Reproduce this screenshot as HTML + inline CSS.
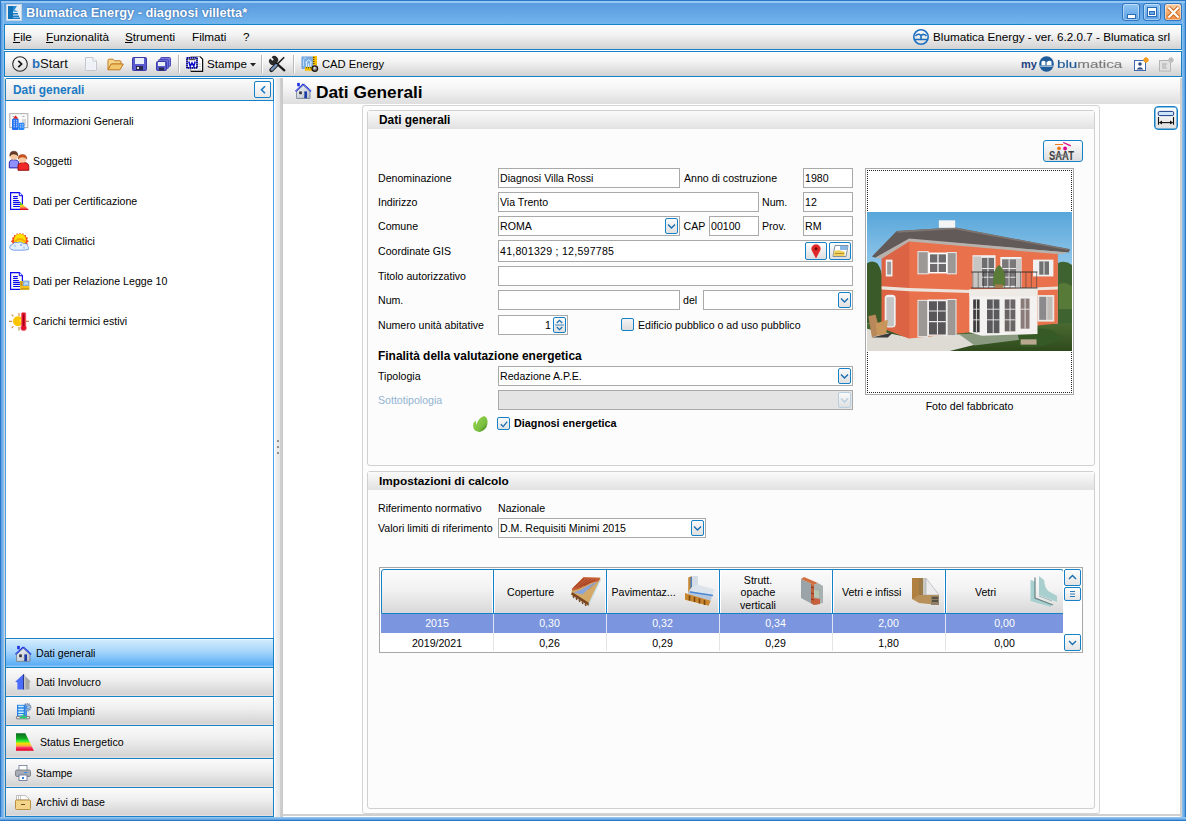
<!DOCTYPE html><html><head><meta charset="utf-8"><style>
html,body{margin:0;padding:0;}
body{width:1186px;height:821px;position:relative;overflow:hidden;background:#fff;font-family:"Liberation Sans",sans-serif;}
div{position:absolute;box-sizing:border-box;}
.t{white-space:nowrap;line-height:1;}
svg{overflow:visible}
</style></head><body>
<div style="left:0px;top:0px;width:1186px;height:821px;background:#6aaee8;"></div>
<div style="left:0px;top:0px;width:1186px;height:24px;background:linear-gradient(#5a9ce0 0,#5c9ee0 25%,#72b4ec 100%);"></div>
<div style="left:4px;top:24px;width:1178px;height:793px;background:#fff;"></div>
<div style="left:0px;top:0px;width:1186px;height:1px;background:#2a78c8"></div>
<div style="left:0px;top:1px;width:1186px;height:2px;background:#93c6f1"></div>
<div style="left:0px;top:0px;width:1px;height:821px;background:#2a78c8"></div>
<div style="left:1185px;top:0px;width:1px;height:821px;background:#2a78c8"></div>
<div style="left:1px;top:3px;width:3px;height:818px;background:linear-gradient(90deg,#5a9ce0,#8cc5f2)"></div>
<div style="left:1182px;top:3px;width:3px;height:818px;background:linear-gradient(90deg,#8cc5f2,#5a9ce0)"></div>
<div style="left:0px;top:817px;width:1186px;height:4px;background:linear-gradient(#9ccdf4,#3f88d6)"></div>
<div style="left:0px;top:820px;width:1186px;height:1px;background:#2a78c8"></div>
<div class="t" style="left:26px;top:7px;font-size:12.8px;font-weight:bold;color:#fff;text-shadow:0 0 2px rgba(20,60,130,.55),0 0 1px rgba(20,60,130,.4);">Blumatica Energy - diagnosi villetta*</div>
<div style="left:1122px;top:3px;width:18px;height:18px;border:1px solid #2f76c2;border-radius:3px;background:linear-gradient(#8ec4f2,#5ea2e4);box-shadow:inset 0 0 0 1px rgba(255,255,255,.45);"><div style="left:4px;top:10px;width:7px;height:3px;background:#fff;border:1px solid #2a6cb8;box-sizing:content-box"></div></div>
<div style="left:1143px;top:3px;width:18px;height:18px;border:1px solid #2f76c2;border-radius:3px;background:linear-gradient(#8ec4f2,#5ea2e4);box-shadow:inset 0 0 0 1px rgba(255,255,255,.45);"><div style="left:3px;top:3px;width:10px;height:10px;border:1px solid #2a6cb8;box-sizing:border-box;background:#fff"></div><div style="left:5px;top:7px;width:6px;height:4px;background:#6aaae8;border:1px solid #2a6cb8"></div></div>
<div style="left:1164px;top:3px;width:18px;height:18px;border:1px solid #2f76c2;border-radius:3px;background:linear-gradient(#fbd2aa,#ee8c3c);box-shadow:inset 0 0 0 1px rgba(255,255,255,.45);"><svg style="position:absolute;left:2px;top:2px" width="13" height="13" viewBox="0 0 13 13"><path d="M1.5 1.5L11.5 11.5M11.5 1.5L1.5 11.5" stroke="#d06a20" stroke-width="4.2"/><path d="M1.5 1.5L11.5 11.5M11.5 1.5L1.5 11.5" stroke="#fff" stroke-width="2.2"/></svg></div>
<div style="left:4px;top:24px;width:1178px;height:26px;border:1px solid #1681c6;background:linear-gradient(#fdfdfd 0%,#f3f3f3 40%,#d2d2d2 100%);"></div>
<div class="t" style="left:13px;top:31px;font-size:11.7px;font-weight:normal;color:#000;"><span style="text-decoration:underline;text-underline-offset:1px">F</span>ile</div>
<div class="t" style="left:46px;top:31px;font-size:11.7px;font-weight:normal;color:#000;"><span style="text-decoration:underline;text-underline-offset:1px">F</span>unzionalità</div>
<div class="t" style="left:125px;top:31px;font-size:11.7px;font-weight:normal;color:#000;"><span style="text-decoration:underline;text-underline-offset:1px">S</span>trumenti</div>
<div class="t" style="left:192px;top:31px;font-size:11.7px;font-weight:normal;color:#000;">Filmati</div>
<div class="t" style="left:243px;top:31px;font-size:11.7px;font-weight:normal;color:#000;">?</div>
<div class="t" style="left:933px;top:31px;font-size:11.7px;font-weight:normal;color:#000;">Blumatica Energy - ver. 6.2.0.7 - Blumatica srl</div>
<div style="left:4px;top:51px;width:1178px;height:26px;border:1px solid #1681c6;background:linear-gradient(#fdfdfd 0%,#f3f3f3 40%,#d2d2d2 100%);"></div>
<div class="t" style="left:32px;top:57px;font-size:13.2px;font-weight:normal;color:#111;"><span style="color:#2a6fb8;font-weight:bold">b</span>Start</div>
<div class="t" style="left:207px;top:58px;font-size:11.6px;font-weight:normal;color:#000;">Stampe</div>
<div class="t" style="left:322px;top:59px;font-size:11.2px;font-weight:normal;color:#000;">CAD Energy</div>
<div style="left:178px;top:55px;width:1px;height:18px;background:#b8b8b8;border-right:1px solid #fff;width:2px"></div>
<div style="left:261px;top:55px;width:1px;height:18px;background:#b8b8b8;border-right:1px solid #fff;width:2px"></div>
<div style="left:293px;top:55px;width:1px;height:18px;background:#b8b8b8;border-right:1px solid #fff;width:2px"></div>
<div style="left:4px;top:78px;width:1px;height:739px;background:#d2d2d2"></div>
<div style="left:5px;top:78px;width:269px;height:739px;border:1px solid #4aa0ea;border-top-color:#1681c6;border-radius:3px 3px 0 0;background:#fff;"></div>
<div style="left:5px;top:78px;width:269px;height:23px;border:1px solid #1681c6;border-bottom:none;border-radius:3px 3px 0 0;"></div>
<div style="left:6px;top:79px;width:267px;height:21px;background:linear-gradient(#fbfbfb,#e4e4e4);"></div>
<div style="left:6px;top:100px;width:267px;height:1px;background:#1681c6"></div>
<div class="t" style="left:13px;top:85px;font-size:11.9px;font-weight:bold;color:#1a7ac4;">Dati generali</div>
<div style="left:254px;top:81px;width:17px;height:17px;border:1px solid #1681c6;border-radius:2px;background:linear-gradient(#fff,#e8e8e8);"><svg style="position:absolute;left:5px;top:3px" width="7" height="10"><path d="M5 1.2L1.5 4.7L5 8.2" stroke="#1a7ac4" stroke-width="1.6" fill="none"/></svg></div>
<div class="t" style="left:33px;top:116px;font-size:10.6px;font-weight:normal;color:#000;">Informazioni Generali</div>
<div class="t" style="left:33px;top:156px;font-size:10.6px;font-weight:normal;color:#000;">Soggetti</div>
<div class="t" style="left:33px;top:196px;font-size:10.6px;font-weight:normal;color:#000;">Dati per Certificazione</div>
<div class="t" style="left:33px;top:236px;font-size:10.6px;font-weight:normal;color:#000;">Dati Climatici</div>
<div class="t" style="left:33px;top:276px;font-size:10.6px;font-weight:normal;color:#000;">Dati per Relazione Legge 10</div>
<div class="t" style="left:33px;top:316px;font-size:10.6px;font-weight:normal;color:#000;">Carichi termici estivi</div>
<div style="left:6px;top:638px;width:267px;height:30px;border-top:1px solid #1681c6;border-bottom:1px solid #1681c6;background:linear-gradient(#ffffff 0,#d2ebfd 1px,#a6d5fb 45%,#5caef6 92%,#9ad0fa 100%);"></div>
<div style="left:6px;top:667px;width:267px;height:30px;border-top:1px solid #1681c6;border-bottom:1px solid #1681c6;background:linear-gradient(#ffffff 0,#fafafa 1px,#efefef 40%,#d4d4d4 94%,#ebe4e0 100%);"></div>
<div style="left:6px;top:696px;width:267px;height:30px;border-top:1px solid #1681c6;border-bottom:1px solid #1681c6;background:linear-gradient(#ffffff 0,#fafafa 1px,#efefef 40%,#d4d4d4 94%,#ebe4e0 100%);"></div>
<div style="left:6px;top:725px;width:267px;height:34px;border-top:1px solid #1681c6;border-bottom:1px solid #1681c6;background:linear-gradient(#ffffff 0,#fafafa 1px,#efefef 40%,#d4d4d4 94%,#ebe4e0 100%);"></div>
<div style="left:6px;top:758px;width:267px;height:30px;border-top:1px solid #1681c6;border-bottom:1px solid #1681c6;background:linear-gradient(#ffffff 0,#fafafa 1px,#efefef 40%,#d4d4d4 94%,#ebe4e0 100%);"></div>
<div style="left:6px;top:787px;width:267px;height:30px;border-top:1px solid #1681c6;border-bottom:1px solid #1681c6;background:linear-gradient(#ffffff 0,#fafafa 1px,#efefef 40%,#d4d4d4 94%,#ebe4e0 100%);"></div>
<div style="left:5px;top:638px;width:269px;height:179px;border:1px solid #1681c6;"></div>
<div class="t" style="left:36px;top:648px;font-size:10.6px;font-weight:normal;color:#000;">Dati generali</div>
<div class="t" style="left:36px;top:677px;font-size:10.6px;font-weight:normal;color:#000;">Dati Involucro</div>
<div class="t" style="left:36px;top:706px;font-size:10.6px;font-weight:normal;color:#000;">Dati Impianti</div>
<div class="t" style="left:40px;top:737px;font-size:10.6px;font-weight:normal;color:#000;">Status Energetico</div>
<div class="t" style="left:36px;top:768px;font-size:10.6px;font-weight:normal;color:#000;">Stampe</div>
<div class="t" style="left:36px;top:797px;font-size:10.6px;font-weight:normal;color:#000;">Archivi di base</div>
<div style="left:274px;top:78px;width:9px;height:739px;background:linear-gradient(90deg,#fff 0,#fff 1px,#f2f2f2 1px,#e4e4e4 6px,#d0d0d0 6px,#c8c8c8 9px)"></div>
<div style="left:277px;top:440px;width:2px;height:2px;background:#8a8a8a;border-radius:0.5px"></div>
<div style="left:277px;top:446px;width:2px;height:2px;background:#8a8a8a;border-radius:0.5px"></div>
<div style="left:277px;top:452px;width:2px;height:2px;background:#8a8a8a;border-radius:0.5px"></div>
<div style="left:283px;top:78px;width:899px;height:739px;background:#fff;"></div>
<div style="left:283px;top:79px;width:897px;height:25px;background:linear-gradient(#fdfdfd,#f4f4f4 40%,#dedede);border-radius:0 3px 0 0"></div>
<div style="left:1180px;top:78px;width:2px;height:739px;background:#d0d0d0"></div>
<div style="left:283px;top:814px;width:899px;height:2px;background:#d0d0d0"></div>
<div class="t" style="left:316px;top:84px;font-size:17.3px;font-weight:bold;color:#000;">Dati Generali</div>
<div style="left:1154px;top:106px;width:24px;height:24px;border:1px solid #1681c6;box-shadow:inset 0 0 0 0.5px #1681c6;border-radius:4px;background:linear-gradient(#fff,#f4f4f4 40%,#dedede);"></div>
<div style="left:362px;top:105px;width:738px;height:709px;border:1px solid #d4d4d4;border-radius:3px;background:#fdfdfd;"></div>
<div style="left:367px;top:110px;width:728px;height:356px;border:1px solid #d0d0d0;border-radius:3px;background:#fcfcfc;"></div>
<div style="left:368px;top:111px;width:726px;height:18px;background:linear-gradient(#fafafa,#e2e2e2);"></div>
<div class="t" style="left:379px;top:115px;font-size:11.9px;font-weight:bold;color:#000;">Dati generali</div>
<div style="left:367px;top:471px;width:728px;height:338px;border:1px solid #d0d0d0;border-radius:3px;background:#fcfcfc;"></div>
<div style="left:368px;top:472px;width:726px;height:18px;background:linear-gradient(#fafafa,#e2e2e2);"></div>
<div class="t" style="left:379px;top:476px;font-size:11.8px;font-weight:bold;color:#000;">Impostazioni di calcolo</div>
<div class="t" style="left:378px;top:173px;font-size:10.6px;font-weight:normal;color:#000;">Denominazione</div>
<div class="t" style="left:378px;top:197px;font-size:10.6px;font-weight:normal;color:#000;">Indirizzo</div>
<div class="t" style="left:378px;top:221px;font-size:10.6px;font-weight:normal;color:#000;">Comune</div>
<div class="t" style="left:378px;top:246px;font-size:10.6px;font-weight:normal;color:#000;">Coordinate GIS</div>
<div class="t" style="left:378px;top:271px;font-size:10.6px;font-weight:normal;color:#000;">Titolo autorizzativo</div>
<div class="t" style="left:378px;top:295px;font-size:10.6px;font-weight:normal;color:#000;">Num.</div>
<div class="t" style="left:378px;top:320px;font-size:10.6px;font-weight:normal;color:#000;">Numero unità abitative</div>
<div class="t" style="left:378px;top:351px;font-size:11.95px;font-weight:bold;color:#000;">Finalità della valutazione energetica</div>
<div class="t" style="left:378px;top:371px;font-size:10.6px;font-weight:normal;color:#000;">Tipologia</div>
<div class="t" style="left:378px;top:395px;font-size:10.6px;font-weight:normal;color:#93b4d2;">Sottotipologia</div>
<div style="left:498px;top:168px;width:182px;height:20px;border:1px solid #a9a9a9;background:#fff;"></div>
<div class="t" style="left:500px;top:173px;font-size:10.6px;font-weight:normal;color:#000;">Diagnosi Villa Rossi</div>
<div class="t" style="left:684px;top:173px;font-size:10.6px;font-weight:normal;color:#000;">Anno di costruzione</div>
<div style="left:803px;top:168px;width:50px;height:20px;border:1px solid #a9a9a9;background:#fff;"></div>
<div class="t" style="left:805px;top:173px;font-size:10.6px;font-weight:normal;color:#000;">1980</div>
<div style="left:498px;top:192px;width:261px;height:20px;border:1px solid #a9a9a9;background:#fff;"></div>
<div class="t" style="left:500px;top:197px;font-size:10.6px;font-weight:normal;color:#000;">Via Trento</div>
<div class="t" style="left:762px;top:197px;font-size:10.6px;font-weight:normal;color:#000;">Num.</div>
<div style="left:803px;top:192px;width:50px;height:20px;border:1px solid #a9a9a9;background:#fff;"></div>
<div class="t" style="left:805px;top:197px;font-size:10.6px;font-weight:normal;color:#000;">12</div>
<div style="left:498px;top:216px;width:182px;height:20px;border:1px solid #a9a9a9;background:#fff;"></div>
<div class="t" style="left:500px;top:221px;font-size:10.6px;font-weight:normal;color:#000;">ROMA</div>
<div style="left:665px;top:218px;width:13px;height:16px;border:1px solid #1681c6;border-radius:2px;background:linear-gradient(#fafafa,#e0e0e0);"><svg style="position:absolute;left:1px;top:4px" width="9" height="7"><path d="M1 1.5L4.5 5L8 1.5" stroke="#1a6db0" stroke-width="1.4" fill="none"/></svg></div>
<div class="t" style="left:683.5px;top:221px;font-size:10.6px;font-weight:normal;color:#000;">CAP</div>
<div style="left:709px;top:216px;width:50px;height:20px;border:1px solid #a9a9a9;background:#fff;"></div>
<div class="t" style="left:711px;top:221px;font-size:10.6px;font-weight:normal;color:#000;">00100</div>
<div class="t" style="left:762px;top:221px;font-size:10.6px;font-weight:normal;color:#000;">Prov.</div>
<div style="left:803px;top:216px;width:50px;height:20px;border:1px solid #a9a9a9;background:#fff;"></div>
<div class="t" style="left:805px;top:221px;font-size:10.6px;font-weight:normal;color:#000;">RM</div>
<div style="left:498px;top:240px;width:355px;height:22px;border:1px solid #a9a9a9;background:#fff;"></div>
<div class="t" style="left:500px;top:246px;font-size:10.6px;font-weight:normal;color:#000;letter-spacing:0.25px">41,801329 ; 12,597785</div>
<div style="left:805px;top:242px;width:22px;height:18px;border:1px solid #1681c6;border-radius:2px;background:linear-gradient(#fdfdfd,#dedede);"></div>
<div style="left:829px;top:242px;width:22px;height:18px;border:1px solid #1681c6;border-radius:2px;background:linear-gradient(#fdfdfd,#dedede);"></div>
<div style="left:498px;top:266px;width:355px;height:20px;border:1px solid #a9a9a9;background:#fff;"></div>
<div style="left:498px;top:290px;width:182px;height:20px;border:1px solid #a9a9a9;background:#fff;"></div>
<div class="t" style="left:683px;top:295px;font-size:10.6px;font-weight:normal;color:#000;">del</div>
<div style="left:703px;top:290px;width:150px;height:20px;border:1px solid #a9a9a9;background:#fff;"></div>
<div style="left:838px;top:292px;width:13px;height:16px;border:1px solid #1681c6;border-radius:2px;background:linear-gradient(#fafafa,#e0e0e0);"><svg style="position:absolute;left:1px;top:4px" width="9" height="7"><path d="M1 1.5L4.5 5L8 1.5" stroke="#1a6db0" stroke-width="1.4" fill="none"/></svg></div>
<div style="left:498px;top:315px;width:70px;height:20px;border:1px solid #a9a9a9;background:#fff;"></div>
<div class="t" style="left:531px;width:20px;text-align:right;top:320px;font-size:10.6px;font-weight:normal;color:#000;">1</div>
<div style="left:553px;top:317px;width:13px;height:16px;border:1px solid #1681c6;border-radius:2px;background:linear-gradient(#fafafa,#e0e0e0);"></div>
<div style="left:621px;top:318px;width:13px;height:13px;border:1px solid #1681c6;border-radius:2px;background:linear-gradient(#f4f4f4,#dcdcdc);"></div>
<div class="t" style="left:638px;top:320px;font-size:10.6px;font-weight:normal;color:#000;">Edificio pubblico o ad uso pubblico</div>
<div style="left:498px;top:366px;width:355px;height:20px;border:1px solid #a9a9a9;background:#fff;"></div>
<div class="t" style="left:500px;top:371px;font-size:10.6px;font-weight:normal;color:#000;">Redazione A.P.E.</div>
<div style="left:838px;top:368px;width:13px;height:16px;border:1px solid #1681c6;border-radius:2px;background:linear-gradient(#fafafa,#e0e0e0);"><svg style="position:absolute;left:1px;top:4px" width="9" height="7"><path d="M1 1.5L4.5 5L8 1.5" stroke="#1a6db0" stroke-width="1.4" fill="none"/></svg></div>
<div style="left:498px;top:390px;width:355px;height:20px;border:1px solid #a9a9a9;background:#e4e4e4;"></div>
<div style="left:838px;top:392px;width:13px;height:16px;border:1px solid #b6cfe2;border-radius:2px;background:linear-gradient(#fafafa,#e0e0e0);"><svg style="position:absolute;left:1px;top:4px" width="9" height="7"><path d="M1 1.5L4.5 5L8 1.5" stroke="#b6cfe2" stroke-width="1.4" fill="none"/></svg></div>
<div style="left:497px;top:417px;width:13px;height:13px;border:1px solid #1681c6;border-radius:2px;background:linear-gradient(#fafafa,#e2e2e2);"><svg style="position:absolute;left:1px;top:1px" width="11" height="11"><path d="M1.8 5.2L4.2 7.6L8.2 2.6" stroke="#1a6db0" stroke-width="1.3" fill="none"/></svg></div>
<div class="t" style="left:514px;top:418px;font-size:10.8px;font-weight:bold;color:#000;">Diagnosi energetica</div>
<div style="left:865px;top:168px;width:209px;height:227px;border:1px solid #a8a8a8;background:#fff;"></div>
<div style="left:867px;top:170px;width:205px;height:223px;border:1px dotted #222;"></div>
<div class="t" style="left:894.5px;width:150px;text-align:center;top:401px;font-size:10.6px;font-weight:normal;color:#000;">Foto del fabbricato</div>
<div style="left:1043px;top:140px;width:40px;height:22px;border:1px solid #1681c6;border-radius:3px;background:linear-gradient(#fdfdfd,#dcdcdc);"></div>
<div class="t" style="left:378px;top:503px;font-size:10.6px;font-weight:normal;color:#000;">Riferimento normativo</div>
<div class="t" style="left:498px;top:503px;font-size:10.6px;font-weight:normal;color:#000;">Nazionale</div>
<div class="t" style="left:378px;top:523px;font-size:10.6px;font-weight:normal;color:#000;">Valori limiti di riferimento</div>
<div style="left:498px;top:518px;width:208px;height:20px;border:1px solid #a9a9a9;background:#fff;"></div>
<div class="t" style="left:500px;top:523px;font-size:10.6px;font-weight:normal;color:#000;">D.M. Requisiti Minimi 2015</div>
<div style="left:691px;top:520px;width:13px;height:16px;border:1px solid #1681c6;border-radius:2px;background:linear-gradient(#fafafa,#e0e0e0);"><svg style="position:absolute;left:1px;top:4px" width="9" height="7"><path d="M1 1.5L4.5 5L8 1.5" stroke="#1a6db0" stroke-width="1.4" fill="none"/></svg></div>
<div style="left:379px;top:567px;width:704px;height:86px;border:1px solid #a8a8a8;background:#fff;"></div>
<div style="left:381px;top:569px;width:683px;height:45px;border:1px solid #1681c6;border-radius:3px 3px 0 0;background:linear-gradient(#fbfbfb,#f2f2f2 45%,#d8d8d8);"></div>
<div style="left:492px;top:570px;width:3px;height:43px;background:linear-gradient(90deg,#fff 0,#fff 1px,#1681c6 1px,#1681c6 2px,#fff 2px)"></div>
<div style="left:605px;top:570px;width:3px;height:43px;background:linear-gradient(90deg,#fff 0,#fff 1px,#1681c6 1px,#1681c6 2px,#fff 2px)"></div>
<div style="left:718px;top:570px;width:3px;height:43px;background:linear-gradient(90deg,#fff 0,#fff 1px,#1681c6 1px,#1681c6 2px,#fff 2px)"></div>
<div style="left:831px;top:570px;width:3px;height:43px;background:linear-gradient(90deg,#fff 0,#fff 1px,#1681c6 1px,#1681c6 2px,#fff 2px)"></div>
<div style="left:944px;top:570px;width:3px;height:43px;background:linear-gradient(90deg,#fff 0,#fff 1px,#1681c6 1px,#1681c6 2px,#fff 2px)"></div>
<div style="left:381px;top:614px;width:683px;height:19px;background:#7b95de"></div>
<div style="left:493px;top:614px;width:1px;height:19px;background:#dfe4f4"></div>
<div style="left:493px;top:633px;width:1px;height:18px;background:#e4e4e4"></div>
<div style="left:606px;top:614px;width:1px;height:19px;background:#dfe4f4"></div>
<div style="left:606px;top:633px;width:1px;height:18px;background:#e4e4e4"></div>
<div style="left:719px;top:614px;width:1px;height:19px;background:#dfe4f4"></div>
<div style="left:719px;top:633px;width:1px;height:18px;background:#e4e4e4"></div>
<div style="left:832px;top:614px;width:1px;height:19px;background:#dfe4f4"></div>
<div style="left:832px;top:633px;width:1px;height:18px;background:#e4e4e4"></div>
<div style="left:945px;top:614px;width:1px;height:19px;background:#dfe4f4"></div>
<div style="left:945px;top:633px;width:1px;height:18px;background:#e4e4e4"></div>
<div class="t" style="left:382.0px;width:110px;text-align:center;top:618px;font-size:10.6px;font-weight:normal;color:#fff;">2015</div>
<div class="t" style="left:382.0px;width:110px;text-align:center;top:638px;font-size:10.6px;font-weight:normal;color:#000;">2019/2021</div>
<div class="t" style="left:494.5px;width:110px;text-align:center;top:618px;font-size:10.6px;font-weight:normal;color:#fff;">0,30</div>
<div class="t" style="left:494.5px;width:110px;text-align:center;top:638px;font-size:10.6px;font-weight:normal;color:#000;">0,26</div>
<div class="t" style="left:607.5px;width:110px;text-align:center;top:618px;font-size:10.6px;font-weight:normal;color:#fff;">0,32</div>
<div class="t" style="left:607.5px;width:110px;text-align:center;top:638px;font-size:10.6px;font-weight:normal;color:#000;">0,29</div>
<div class="t" style="left:720.5px;width:110px;text-align:center;top:618px;font-size:10.6px;font-weight:normal;color:#fff;">0,34</div>
<div class="t" style="left:720.5px;width:110px;text-align:center;top:638px;font-size:10.6px;font-weight:normal;color:#000;">0,29</div>
<div class="t" style="left:833.5px;width:110px;text-align:center;top:618px;font-size:10.6px;font-weight:normal;color:#fff;">2,00</div>
<div class="t" style="left:833.5px;width:110px;text-align:center;top:638px;font-size:10.6px;font-weight:normal;color:#000;">1,80</div>
<div class="t" style="left:949.5px;width:110px;text-align:center;top:618px;font-size:10.6px;font-weight:normal;color:#fff;">0,00</div>
<div class="t" style="left:949.5px;width:110px;text-align:center;top:638px;font-size:10.6px;font-weight:normal;color:#000;">0,00</div>
<div class="t" style="left:507px;top:587px;font-size:10.6px;font-weight:normal;color:#000;">Coperture</div>
<div class="t" style="left:611.5px;top:587px;font-size:10.6px;font-weight:normal;color:#000;">Pavimentaz...</div>
<div class="t" style="left:718.0px;width:80px;text-align:center;top:575px;font-size:10.6px;font-weight:normal;color:#000;">Strutt.</div>
<div class="t" style="left:718.0px;width:80px;text-align:center;top:587px;font-size:10.6px;font-weight:normal;color:#000;">opache</div>
<div class="t" style="left:718.0px;width:80px;text-align:center;top:600px;font-size:10.6px;font-weight:normal;color:#000;">verticali</div>
<div class="t" style="left:842px;top:587px;font-size:10.6px;font-weight:normal;color:#000;">Vetri e infissi</div>
<div class="t" style="left:975px;top:587px;font-size:10.6px;font-weight:normal;color:#000;">Vetri</div>
<div style="left:1063px;top:569px;width:19px;height:83px;background:#fff;"></div>
<div style="left:1064px;top:569px;width:17px;height:17px;border:1px solid #1681c6;border-radius:2px;background:linear-gradient(#fff,#e4e4e4);"></div>
<div style="left:1064px;top:587px;width:17px;height:14px;border:1px solid #1681c6;border-radius:2px;background:linear-gradient(#fff,#e4e4e4);"></div>
<div style="left:1064px;top:634px;width:17px;height:17px;border:1px solid #1681c6;border-radius:2px;background:linear-gradient(#fff,#e4e4e4);"></div>
<svg style="position:absolute;left:6px;top:4px" width="16" height="17" viewBox="0 0 16 17"><rect x="0.5" y="0.5" width="15" height="16" fill="#e8eef4" stroke="#c8d4e0"/>
<rect x="2" y="2" width="5" height="13" fill="#0f72b8"/><path d="M7 2h4l-4 6z" fill="#2a8ad0"/>
<path d="M7 9h5v1.5H7zM7 11.5h6v1.5H7zM7 13.5h7v1.5H7z" fill="#1a7cc4"/><path d="M8 5l4 3h-4z" fill="#5aaee8"/></svg>
<svg style="position:absolute;left:12px;top:56px" width="16" height="16" viewBox="0 0 16 16"><circle cx="8" cy="8" r="7.3" fill="none" stroke="#2a2a2a" stroke-width="1.1"/><path d="M6.3 4.8L9.6 8L6.3 11.2" fill="none" stroke="#111" stroke-width="1.7"/></svg>
<svg style="position:absolute;left:85px;top:57px" width="12" height="14" viewBox="0 0 12 14"><path d="M0.5 0.5H8L11.5 4V13.5H0.5Z" fill="#f2f5fa" stroke="#c4c8ce"/><path d="M8 0.5V4H11.5" fill="#fff" stroke="#c4c8ce"/><path d="M2 6h8M2 8h8M2 10h8M2 12h8" stroke="#e2e8f0" stroke-width="0.6"/></svg>
<svg style="position:absolute;left:107px;top:58px" width="17" height="13" viewBox="0 0 17 13"><path d="M1 2.5Q1 1.2 2.2 1.2H6L7.5 2.8H13Q14 2.8 14 4V6H4.5L1 11.5Z" fill="#f6d68a" stroke="#c07a20"/><path d="M1 11.8L4.2 6H16.3L13 11.8Z" fill="#f3c66c" stroke="#c07a20"/></svg>
<svg style="position:absolute;left:132px;top:57px" width="15" height="14" viewBox="0 0 15 14"><rect x="0.5" y="0.5" width="14" height="13" rx="1" fill="#5a5ad0" stroke="#3a3aa8"/><rect x="3" y="1" width="9" height="6" fill="#e8eef8"/><rect x="4" y="9" width="7" height="4" fill="#2a2a50"/><rect x="5" y="10" width="2" height="2" fill="#ddd"/></svg>
<svg style="position:absolute;left:156px;top:57px" width="15" height="14" viewBox="0 0 15 14"><rect x="4.5" y="0.5" width="10" height="9" rx="1" fill="#7c7ce0" stroke="#4a4ab8"/><rect x="2.5" y="2.5" width="10" height="9" rx="1" fill="#6a6ad8" stroke="#4a4ab8"/><rect x="0.5" y="4.5" width="10" height="9" rx="1" fill="#5a5ad0" stroke="#3a3aa8"/><rect x="2" y="5" width="7" height="4" fill="#e8eef8"/><rect x="3" y="10.5" width="5" height="3" fill="#2a2a50"/></svg>
<svg style="position:absolute;left:186px;top:56px" width="18" height="17" viewBox="0 0 18 17"><path d="M4.7 0.6H14L16.6 3.2V15.2H4.7Z" fill="#fff" stroke="#9a9a9a" stroke-width="1"/><path d="M14 0.6L16.6 3.2V15.4H4.7" fill="none" stroke="#111" stroke-width="1.2"/><path d="M12 8h3M12 10.5h3M12 13h3" stroke="#bbb" stroke-width="0.8"/><rect x="1" y="1.9" width="10" height="10" fill="#fff"/><rect x="1" y="1.9" width="10" height="10" fill="none" stroke="#0a0aee" stroke-width="1.3"/><rect x="1" y="1.9" width="10" height="10" fill="none" stroke="#111" stroke-width="1.3" stroke-dasharray="1 1"/><path d="M2.6 3.7H9.4" stroke="#111" stroke-width="0.9"/><path d="M2.8 5.5L4.2 10.3L6 6.8L7.8 10.3L9.2 5.5" fill="none" stroke="#0a0ac8" stroke-width="1.5"/></svg>
<svg style="position:absolute;left:250px;top:63px" width="6" height="4" viewBox="0 0 6 4"><path d="M0 0H6L3 3.5Z" fill="#222"/></svg>
<svg style="position:absolute;left:269px;top:56px" width="17" height="16" viewBox="0 0 17 16"><path d="M6.5 6.5L15.3 14.3" stroke="#1a1a1a" stroke-width="2.3" stroke-linecap="round"/><path d="M1.2 2.6A3.8 3.8 0 0 0 6.6 8L8 6.6A3.8 3.8 0 0 0 2.6 1.2L4.8 3.4L3.4 4.8Z" fill="#2a2a2a"/><path d="M15.2 1.2L6.8 9.6" stroke="#1a1a1a" stroke-width="1.5"/><path d="M7.6 8.8L2.4 14" stroke="#1a1a1a" stroke-width="4.2" stroke-linecap="round"/><path d="M7.2 9.2L2.8 13.6" stroke="#7896c0" stroke-width="2.4" stroke-linecap="round"/></svg>
<svg style="position:absolute;left:301px;top:56px" width="18" height="17" viewBox="0 0 18 17"><rect x="0.9" y="0.9" width="11" height="11.7" fill="#7aaee4" stroke="#5a8ed0" stroke-width="0.6"/><path d="M2.5 2H5M2.5 3.5V10" stroke="#cfe6fc" stroke-width="0.8"/><path d="M4.6 6.5L7.8 3.8L10.8 6.5M5.6 6V11M9.8 6V11M7.7 7.5V11" fill="none" stroke="#e8f4ff" stroke-width="1"/><rect x="11.9" y="0" width="4.1" height="9.2" fill="#f4c000"/><path d="M12 1.5h1.5M12 3.5h1.5M12 5.5h1.5M12 7.5h1.5" stroke="#3a2a00" stroke-width="0.8"/><rect x="3.9" y="10.9" width="8.8" height="3.9" fill="#f4c000"/><path d="M5.5 11v1.3M7.5 11v1.3M9.5 11v1.3M11.5 11v1.3" stroke="#3a2a00" stroke-width="0.8"/><circle cx="13.8" cy="12.6" r="2.8" fill="#8a8a8a" stroke="#221a10" stroke-width="1.3"/><circle cx="13.6" cy="12" r="1" fill="#e8e8e8"/></svg>
<div class="t" style="left:1021px;top:59px;font-size:11px;font-weight:bold;color:#1c3f82;line-height:1;">my</div>
<svg style="position:absolute;left:1039px;top:56px" width="15" height="16" viewBox="0 0 15 16"><ellipse cx="7.5" cy="8" rx="7.3" ry="7.8" fill="#1f5c9c"/><path d="M2.5 5.5Q5 3.5 7.3 6.3Q10 3.5 12.5 5.5L12.5 9.3H2.5Z" fill="#fff"/><path d="M7 5.8V9.5" stroke="#1f5c9c" stroke-width="1.2"/><path d="M1.2 10.2H13.8" stroke="#fff" stroke-width="0.8"/></svg>
<div class="t" style="left:1057px;top:59px;font-size:10.6px;color:#1f5a98;line-height:1;transform:scaleX(1.44);transform-origin:0 0;-webkit-text-stroke:0.15px #1f5a98">blu<span style="color:#7c7c7c;-webkit-text-stroke:0.15px #7c7c7c">matica</span></div>
<svg style="position:absolute;left:1134px;top:57px" width="15" height="14" viewBox="0 0 15 14"><rect x="0.5" y="3.5" width="11" height="10" fill="#fff" stroke="#3a6ab8"/><circle cx="6" cy="7" r="1.8" fill="#2a4a80"/><path d="M2.5 12.5Q6 8 9.5 12.5Z" fill="#2a4a80"/><circle cx="12" cy="3" r="2.5" fill="#f4a020"/><path d="M12 0v6M9 3h6M10 1l4 4M14 1l-4 4" stroke="#f4a020" stroke-width="0.8"/></svg>
<svg style="position:absolute;left:1159px;top:57px" width="15" height="14" viewBox="0 0 15 14"><rect x="0.5" y="3.5" width="11" height="10.5" fill="#e2e2e2" stroke="#b4b4b4"/><path d="M3 7h5M3 9h4M3 11h5" stroke="#aaa"/><circle cx="12" cy="3" r="2.6" fill="#c8c8c8"/><path d="M12 0v6M9 3h6M10 1l4 4M14 1l-4 4" stroke="#b8b8b8" stroke-width="0.8"/></svg>
<svg style="position:absolute;left:913px;top:29px" width="16" height="16" viewBox="0 0 16 16"><circle cx="8" cy="8" r="7.2" fill="none" stroke="#1e6fbe" stroke-width="1.6"/><path d="M2.5 7Q5 4 8 6.5Q11 4 13.5 7" fill="none" stroke="#1e6fbe" stroke-width="1.5"/><path d="M8 6.5V10.5M1.5 10.5H14.5" stroke="#1e6fbe" stroke-width="1.6"/></svg>
<svg style="position:absolute;left:9px;top:113px" width="20" height="18" viewBox="0 0 20 18"><rect x="0.8" y="0.6" width="18" height="14" fill="#fafafa" stroke="#b4b4b4" stroke-width="1.1"/><rect x="13" y="6" width="4" height="7" fill="#d8d8d8"/><path d="M3.5 3.5h2M13.5 3.5h2" stroke="#9a9a9a" stroke-width="0.8"/><path d="M3.8 5.8L6.6 2.6L9.4 5.8Z" fill="#e01818"/><rect x="3" y="5.8" width="6.6" height="11.2" rx="1" fill="#1f6ff0"/><rect x="9.6" y="9.8" width="5.8" height="7.2" rx="1" fill="#2a86f8"/><path d="M4.6 7.8h1.3M7 7.8h1.3M4.6 9.8h1.3M7 9.8h1.3M4.6 11.8h1.3M7 11.8h1.3M4.6 13.8h1.3M7 13.8h1.3M11 11.8h1.2M13.2 11.8h1.2M11 14h1.2M13.2 14h1.2" stroke="#d8ecff" stroke-width="1"/></svg>
<svg style="position:absolute;left:9px;top:151px" width="21" height="21" viewBox="0 0 21 21"><path d="M0.3 16.9V12Q0.3 8.7 4.5 8.7Q9.7 8.7 9.7 12V16.9Z" fill="#9090ff" stroke="#1a1aa0" stroke-width="0.9"/><circle cx="4.8" cy="4.8" r="3.9" fill="#f8c8a0"/><path d="M0.8 5.2Q0.6 0.2 4.8 0.2Q9.2 0.2 8.8 5Q7.5 2.8 4.8 3Q2.4 2.6 0.8 5.2Z" fill="#6a3a28" stroke="#3a2010" stroke-width="0.5"/><path d="M9 19.3V15Q9 11.5 14.4 11.5Q19.8 11.5 19.8 15.5V19.3Z" fill="#f02828" stroke="#8a0a0a" stroke-width="0.9"/><circle cx="13.4" cy="7.8" r="4" fill="#fcc8a0"/><path d="M9.2 8Q9 3.6 13.4 3.6Q18 3.6 17.8 8.2Q16.5 5.6 13.4 6Q10.8 5.6 9.2 8Z" fill="#d8581a" stroke="#8a3010" stroke-width="0.5"/></svg>
<svg style="position:absolute;left:10px;top:192px" width="20" height="19" viewBox="0 0 20 19"><path d="M0.6 0.6H9.3L12.4 3.7V17.4H0.6Z" fill="#fcfcf4" stroke="#0808f0" stroke-width="1.15"/><path d="M9.3 0.6V3.7H12.4" fill="#fff" stroke="#0808f0" stroke-width="1"/><path d="M3.1 4.5H7.8M3.1 6.4H7.8M3.1 8.5H8.8M3.1 10.4H9.9M3.1 12.4H9.9M3.1 14.5H9.9" stroke="#0808f0" stroke-width="1.1"/><path d="M10 9.9L18.9 17.9H10Z" fill="#f8c030"/><path d="M10 9.9L11.6 11.3H10Z" fill="#0a9a20"/><path d="M10 11.3L13.4 12.9H10Z" fill="#20e030"/><path d="M10 12.9L15.2 14.5H10Z" fill="#e8d010"/><path d="M10 15.6L16.4 15.6L17.6 16.7H10Z" fill="#ff3a6a"/><path d="M10 16.7H17.6L18.9 17.9H10Z" fill="#d81020"/></svg>
<svg style="position:absolute;left:9px;top:232px" width="21" height="19" viewBox="0 0 21 19"><path d="M11 0.8L12.3 2.2L14.2 1.2L14.9 3.2L17 3L17 5.1L19 5.8L18.2 7.7L19.8 9.2L18.2 10.5L18.8 12.5L4 12.5L3.2 10.5L1.8 9.2L3.6 7.8L3 5.8L5 5.1L5 3L7.2 3.2L7.9 1.2L9.7 2.2Z" fill="#f04a20"/><circle cx="11" cy="7.8" r="6" fill="#fbe000"/><path d="M6 9.5Q11 4.5 16.5 10" fill="none" stroke="#f8a800" stroke-width="2"/><path d="M0.8 15.8Q0.3 12.6 3.6 12.4Q5 9.6 8.6 10.6Q11.6 8.8 14.4 11.6Q18.6 11.2 18.8 14.2Q20.2 15.2 19.2 17.6L14 18.2L5 18.2Q1 17.8 0.8 15.8Z" fill="#e4f0fc" stroke="#5a8ae8" stroke-width="0.8"/><circle cx="6" cy="14" r="1.2" fill="#b8d4f8"/><circle cx="12" cy="13" r="1" fill="#80a8f0"/><circle cx="15" cy="15.5" r="1.2" fill="#b8d4f8"/></svg>
<svg style="position:absolute;left:10px;top:272px" width="20" height="19" viewBox="0 0 20 19"><path d="M0.6 0.6H9.3L12.4 3.7V17.4H0.6Z" fill="#fcfcf4" stroke="#0808f0" stroke-width="1.15"/><path d="M9.3 0.6V3.7H12.4" fill="#fff" stroke="#0808f0" stroke-width="1"/><path d="M3.1 4.5H7.8M3.1 6.4H7.8M3.1 8.5H8.8M3.1 10.4H9.9M3.1 12.4H9.9M3.1 14.5H9.9" stroke="#0808f0" stroke-width="1.1"/><rect x="13" y="9" width="6" height="5" fill="#9cc4ec" stroke="#5a88c0" stroke-width="0.6"/><path d="M14.5 12.5L16 10.5L17.5 12.5" fill="none" stroke="#fff" stroke-width="0.7"/><rect x="10" y="14" width="9.5" height="3.9" fill="#f4c020"/><rect x="10" y="9" width="2.8" height="5" fill="#f4c020"/><path d="M12 16.2v1.2M14 16.2v1.2M16 16.2v1.2M18 16.2v1.2M10.5 11h1.5M10.5 13h1.5" stroke="#6a5010" stroke-width="0.8"/></svg>
<svg style="position:absolute;left:8px;top:312px" width="22" height="20" viewBox="0 0 22 20"><path d="M11 1V4M11 15V18.5M1 9.3H4.2M17.5 9.3H21M3.6 2.6L5.4 4.4M3.6 16.2L5.4 14.2" stroke="#c89050" stroke-width="1.2"/><circle cx="10" cy="9.3" r="5" fill="#fcc400"/><rect x="11.6" y="7.2" width="1.2" height="3" fill="#ffff20"/><path d="M13.4 1.5Q13.4 0.6 15.6 0.6Q17.8 0.6 17.8 1.5V14Q18.4 14.8 18.4 16Q18.4 18.6 15.6 18.6Q12.8 18.6 12.8 16Q12.8 14.8 13.4 14Z" fill="#e0102a" stroke="#ff6070" stroke-width="0.6"/><path d="M15.6 2.5V14" stroke="#9a0018" stroke-width="1.2"/></svg>
<svg style="position:absolute;left:15px;top:645px" width="17" height="17" viewBox="0 0 17 17"><defs><linearGradient id="hg1" x1="0" y1="0" x2="1" y2="1"><stop offset="0" stop-color="#f6f8fb"/><stop offset="1" stop-color="#b4bcc8"/></linearGradient></defs><path d="M1.6 9.4V16.4H15V9.4L8.3 3.2Z" fill="url(#hg1)" stroke="#75828f" stroke-width="0.9"/><path d="M0.6 9.3L8.3 2L16 9.3" fill="none" stroke="#1d2fe0" stroke-width="1.6" stroke-dasharray="1.2 0.35"/><rect x="2.2" y="0.9" width="2.6" height="3.4" fill="#1d2fe0"/><rect x="4.2" y="9.4" width="2.6" height="2.8" fill="#2e3236"/><rect x="9.3" y="9.4" width="2.7" height="6.8" fill="#1a3aa8"/><rect x="8.7" y="12" width="0.6" height="1" fill="#d8c060"/></svg>
<svg style="position:absolute;left:15px;top:674px" width="17" height="17" viewBox="0 0 17 17"><defs><filter id="bl" x="-20%" y="-20%" width="140%" height="140%"><feGaussianBlur stdDeviation="0.6"/></filter></defs><path d="M9.1 1L15.8 7.6L14.5 8.6V15.5H9.1Z" fill="#a8a8a8" filter="url(#bl)"/><path d="M0.2 7.8L8.3 0.2V15.6H2.4V8.6Z" fill="#4a6cf8"/><rect x="8.1" y="0.2" width="1.1" height="15.4" fill="#1a2a80"/><rect x="9.2" y="1" width="1.2" height="14.6" fill="#d4d0c8"/></svg>
<svg style="position:absolute;left:16px;top:702px" width="16" height="18" viewBox="0 0 16 18"><circle cx="11.2" cy="5.3" r="3.6" fill="#9ab0c8" stroke="#7890b0" stroke-width="1.6" stroke-dasharray="1.1 0.9"/><circle cx="11.2" cy="5.3" r="1.6" fill="#3a8ae8"/><circle cx="12" cy="5.3" r="0.8" fill="#fff"/><rect x="1" y="2.8" width="8.6" height="11.4" fill="#2a80e4"/><rect x="9.6" y="8.5" width="1.3" height="5.7" fill="#2a80e4"/><path d="M2.2 4.5h5.5M2.2 7.4h5.5M2.2 10.3h5.5M2.2 12.8h5.5" stroke="#c8f0ff" stroke-width="1.5"/><rect x="0.4" y="14.4" width="13.2" height="2.4" rx="0.6" fill="#e8e8e8" stroke="#707070" stroke-width="0.9"/><rect x="3.8" y="14.9" width="7.2" height="1.4" fill="#10d870"/><rect x="6.6" y="12.4" width="1.6" height="2.4" fill="#10d870"/></svg>
<svg style="position:absolute;left:16px;top:733px" width="19" height="19" viewBox="0 0 19 19"><defs><linearGradient id="eg" x1="0" y1="0" x2="0" y2="1"><stop offset="0" stop-color="#0a6a24"/><stop offset="0.3" stop-color="#10a820"/><stop offset="0.45" stop-color="#30f040"/><stop offset="0.58" stop-color="#f4e000"/><stop offset="0.72" stop-color="#f8b040"/><stop offset="0.82" stop-color="#ff3070"/><stop offset="1" stop-color="#e00010"/></linearGradient></defs><path d="M0 0.2H9.3L17.9 17.8H0Z" fill="url(#eg)"/></svg>
<svg style="position:absolute;left:15px;top:765px" width="16" height="16" viewBox="0 0 16 16"><rect x="4" y="0.5" width="8" height="5" fill="#fff" stroke="#6a7a98" stroke-width="0.8"/><rect x="0.5" y="5" width="15" height="6.5" rx="1.5" fill="#a8acb4" stroke="#70747c" stroke-width="0.8"/><rect x="9" y="7" width="3.5" height="1" fill="#3a8ae0"/><rect x="4" y="10" width="8" height="5.5" fill="#fff" stroke="#5a6a90" stroke-width="0.8"/><rect x="7" y="12" width="2" height="2" fill="#3a7ad0"/></svg>
<svg style="position:absolute;left:15px;top:795px" width="16" height="15" viewBox="0 0 16 15"><path d="M1.5 0.5H10L13.5 3V5H1.5Z" fill="#fff" stroke="#b0b0b0" stroke-width="0.8"/><path d="M3.5 0.5V5M5.5 0.5V5" stroke="#b0b0b0" stroke-width="0.7"/><rect x="0.5" y="5" width="15" height="9.5" rx="1" fill="#f4d488" stroke="#b08838" stroke-width="0.9"/><rect x="6" y="9" width="4" height="1" fill="#6a5020"/></svg>
<svg style="position:absolute;left:295px;top:82px" width="17" height="17" viewBox="0 0 17 17"><defs><linearGradient id="hg2" x1="0" y1="0" x2="1" y2="1"><stop offset="0" stop-color="#f6f8fb"/><stop offset="1" stop-color="#b4bcc8"/></linearGradient></defs><path d="M1.6 9.4V16.4H15V9.4L8.3 3.2Z" fill="url(#hg2)" stroke="#75828f" stroke-width="0.9"/><path d="M0.6 9.3L8.3 2L16 9.3" fill="none" stroke="#1d2fe0" stroke-width="1.6" stroke-dasharray="1.2 0.35"/><rect x="2.2" y="0.9" width="2.6" height="3.4" fill="#1d2fe0"/><rect x="4.2" y="9.4" width="2.6" height="2.8" fill="#2e3236"/><rect x="9.3" y="9.4" width="2.7" height="6.8" fill="#1a3aa8"/><rect x="8.7" y="12" width="0.6" height="1" fill="#d8c060"/></svg>
<svg style="position:absolute;left:1157px;top:110px" width="18" height="16" viewBox="0 0 18 16"><rect x="1.2" y="1.4" width="15.5" height="4.2" rx="1.5" fill="#cce4f8" stroke="#1a3a8a" stroke-width="1"/><path d="M1.5 7V14.8M16.5 7V14.8" stroke="#111" stroke-width="1.1"/><path d="M2.5 12.6H15.5" stroke="#111" stroke-width="1.1"/><path d="M2 12.6L5 10.6V14.6Z M16 12.6L13 10.6V14.6Z" fill="#111"/></svg>
<svg style="position:absolute;left:1046px;top:142px" width="34" height="19" viewBox="0 0 34 19"><text x="3" y="18" textLength="25" lengthAdjust="spacingAndGlyphs" font-family="Liberation Sans" font-weight="bold" font-size="12.5" fill="#3c3c3c">SAAT</text><path d="M8 13.8H22" stroke="#f4f4f4" stroke-width="0.8"/><path d="M8 13.2H22" stroke="#3c3c3c" stroke-width="0.7"/><circle cx="13" cy="6.3" r="1.9" fill="#f07818"/><path d="M9 2.5H17" stroke="#f07818" stroke-width="1"/><circle cx="19.1" cy="6.5" r="1.9" fill="#e0088a"/><path d="M17.3 0.5L24.8 3.8" stroke="#e0088a" stroke-width="1.3"/></svg>
<svg style="position:absolute;left:809px;top:244px" width="14" height="15" viewBox="0 0 14 15"><path d="M7 14.5L3.3 7.5A4.5 4.5 0 1 1 10.7 7.5Z" fill="#e02828"/><circle cx="7" cy="4.8" r="1.5" fill="#6a0a0a"/></svg>
<svg style="position:absolute;left:832px;top:244px" width="17" height="14" viewBox="0 0 17 14"><path d="M3 1.5H16L14 12.5H1Z" fill="#fff" stroke="#607890" stroke-width="0.8"/><path d="M8 2H15.5L15 6H8Z" fill="#88b8e8"/><path d="M2 7Q7 5 13 8L12.5 12H1.5Z" fill="#f0d060"/><path d="M3 9.5H12" stroke="#a08020" stroke-width="0.8"/></svg>
<svg style="position:absolute;left:472px;top:415px" width="17" height="18" viewBox="0 0 17 18"><defs><linearGradient id="lf" x1="0" y1="0" x2="1" y2="1"><stop offset="0" stop-color="#9ad850"/><stop offset="0.6" stop-color="#7cc040"/><stop offset="1" stop-color="#5a9a2a"/></linearGradient></defs><path d="M12.2 1.1Q16.2 3 15.4 8.6Q14.4 15.4 7.4 16.9Q1.2 16.8 1.1 10.6Q1.2 7 3.6 5.4L4.4 10Q6 3.2 12.2 1.1Z" fill="url(#lf)"/><path d="M15.4 8.6Q14.4 15.4 7.4 16.9Q11 13 15.4 8.6Z" fill="#5a9a2a" opacity="0.7"/></svg>
<svg style="position:absolute;left:555px;top:318px" width="9" height="14" viewBox="0 0 9 14"><path d="M1.8 5L4.5 2.3L7.2 5" fill="none" stroke="#1a6db0" stroke-width="1.2"/><path d="M1.8 9L4.5 11.7L7.2 9" fill="none" stroke="#1a6db0" stroke-width="1.2"/><path d="M0 7H9" stroke="#1a6db0" stroke-width="0.8"/></svg>
<svg style="position:absolute;left:1066px;top:572px" width="13" height="11" viewBox="0 0 13 11"><path d="M3 7L6.5 3.5L10 7" fill="none" stroke="#1a6db0" stroke-width="1.4"/></svg>
<svg style="position:absolute;left:1066px;top:589px" width="13" height="10" viewBox="0 0 13 10"><path d="M4 2.5H9M4 5H9M4 7.5H9" stroke="#1a6db0" stroke-width="0.9"/></svg>
<svg style="position:absolute;left:1066px;top:637px" width="13" height="11" viewBox="0 0 13 11"><path d="M3 4L6.5 7.5L10 4" fill="none" stroke="#1a6db0" stroke-width="1.4"/></svg>
<svg style="position:absolute;left:571px;top:577px" width="30" height="30" viewBox="0 0 30 30"><path d="M0.1 17.6L1.2 11.4L12.4 0.2L29.3 0.7L29.3 3.2L17.5 28.8Z" fill="#d4aa68"/><path d="M0.1 17.6L17.5 28.8L18.6 26.2L1.4 15.2Z" fill="#7a4420"/><path d="M2 19l1 2M5 21l1 2M8 23l1 2M11 25l1 2M14 27l1 2" stroke="#6a3a18" stroke-width="1.2"/><path d="M2.5 15.5Q10 13.5 15.5 9.5Q21 6 26.5 5L22 9Q16 12.5 11.5 17.5Z" fill="#8aa4dc"/><path d="M1.2 13.8L1.2 11.4L12.4 0.2L29.3 0.7L27.5 4.3Q20 5.5 14 9Q8 12.5 1.2 13.8Z" fill="#c45e38"/><path d="M3 10.5L13.5 1.5M5.5 11L16.5 2M9 10L20 2.2M13 8.5L24 2.5" stroke="#9a3a1c" stroke-width="0.9"/><path d="M29.3 3.2L17.8 27.5" stroke="#c8e4f4" stroke-width="1.2"/><path d="M18 13L22 7" stroke="#b89050" stroke-width="0.8"/></svg>
<svg style="position:absolute;left:685px;top:576px" width="30" height="30" viewBox="0 0 30 30"><path d="M3.2 1.5L6.8 0.1V16L3.2 17Z" fill="#c88a38"/><path d="M6.8 0.1H12.9V14L6.8 16Z" fill="#d4dce6"/><path d="M6.2 1V16" stroke="#3a7ac8" stroke-width="1.4"/><path d="M6.8 11L12.9 8.8L29.8 13.4L27.5 19L4 15Z" fill="#dde4ec"/><path d="M4 15L27.5 19L25.7 24.7L2.7 18.5Z" fill="#b8c8dc"/><path d="M5 16L28 19.5" stroke="#4a88d8" stroke-width="1.5"/><path d="M0 17L2.7 18L25.7 24.7L23.6 29.8L0 23.7Z" fill="#c8862e"/><path d="M4.5 19.5v5M9.5 21v5M14.5 22.5v5M19.5 24v5" stroke="#7a4810" stroke-width="1.6"/></svg>
<svg style="position:absolute;left:800px;top:577px" width="24" height="29" viewBox="0 0 24 29"><path d="M1 2L14 8V28L1 21Z" fill="#9aa4a8"/><path d="M1 2L4 0L18 6L14 8Z" fill="#d07040"/><path d="M11 7L14 8V28L11 26Z" fill="#c06038"/><path d="M14 8L18 6L23 9V26L14 28Z" fill="#a8b0b0"/><path d="M14 13L19 14V21L14 20Z" fill="#b8c8b0"/><path d="M14 21L20 22V27L14 28Z" fill="#c86040"/><path d="M11 10L14 11M11 16L14 17M11 22L14 23" stroke="#802a20" stroke-width="0.8"/></svg>
<svg style="position:absolute;left:911px;top:577px" width="29" height="29" viewBox="0 0 29 29"><path d="M1 1H8V22H1Z" fill="#b08040"/><path d="M8 1H12V20H8Z" fill="#9a7a48"/><path d="M12 1H15V18H12Z" fill="#c8c8c0"/><path d="M15 1L28 18H15Z" fill="#ececec" stroke="#a8a8b8" stroke-width="0.6"/><path d="M1 22L8 18H28V28L8 26Z" fill="#b8905a"/><path d="M20 19H28V28H20Z" fill="#908068"/><path d="M21 21h6M21 24h6" stroke="#222" stroke-width="1"/></svg>
<svg style="position:absolute;left:1030px;top:576px" width="27" height="30" viewBox="0 0 27 30"><path d="M0.5 4L5 5.5V22L21 28V31L0.5 25Z" fill="#a8d0d0"/><path d="M9 0L14 4Q15 14 20 16L27 20V26L9 19Z" fill="#a8cece"/><path d="M5 1.5V22L23 29" fill="none" stroke="#6a8080" stroke-width="1.2"/><path d="M9 20L22 25" stroke="#8aa8a8" stroke-width="0.8"/></svg>
<svg style="position:absolute;left:867px;top:212px" width="205" height="139" viewBox="12 11 1158 785" preserveAspectRatio="none">
<defs><linearGradient id="sky" x1="0" y1="0" x2="0" y2="1"><stop offset="0" stop-color="#58a6da"/><stop offset="0.35" stop-color="#8cc4e8"/><stop offset="1" stop-color="#d4eaf4"/></linearGradient>
<linearGradient id="grass" x1="0" y1="0" x2="0" y2="1"><stop offset="0" stop-color="#4a6a30"/><stop offset="1" stop-color="#2e4a1c"/></linearGradient></defs>
<rect x="12" y="11" width="1158" height="785" fill="url(#sky)"/>
<path d="M12 300Q40 280 70 300Q95 330 100 400V640H12Z" fill="#3a5a2a"/>
<path d="M1090 300Q1130 280 1170 310V680H1090Z" fill="#3e6230"/>
<path d="M1095 420Q1130 400 1170 430V560H1095Z" fill="#587a38"/>
<path d="M12 640H1170V796H12Z" fill="url(#grass)"/>
<path d="M12 670L250 720L560 700L620 760L480 796H12Z" fill="#dedad4"/>
<path d="M530 700L900 690L980 720L620 765Z" fill="#8a9a80"/>
<path d="M860 690Q950 650 1060 680L1120 720Q1000 790 880 770Z" fill="#365a26"/>
<path d="M880 730h90v30h-90z" fill="#b8a890"/>
<!-- wall -->
<path d="M95 270L250 170L1090 245V640L250 725L95 665Z" fill="#e9714c"/>
<path d="M95 270L250 170L250 725L95 665Z" fill="#dc6444"/>
<!-- cornice band -->
<path d="M95 430L250 440L600 452L1090 432V448L600 468L250 458L95 448Z" fill="#ece4dc"/>
<!-- roof -->
<path d="M40 262L180 118L510 98L1160 222L1150 240L250 165L60 270Z" fill="#625a58"/>
<path d="M180 118L510 98L1160 222L1140 226L510 108L185 128Z" fill="#7e7470"/>
<path d="M60 268L250 160L1150 240L1100 250L250 178L95 275Z" fill="#b8b0aa"/>
<rect x="418" y="58" width="92" height="42" fill="#f4f4f4"/>
<!-- upper left window with shutters -->
<rect x="300" y="235" width="58" height="125" fill="#9c9896" stroke="#e8e8e8" stroke-width="6"/>
<rect x="358" y="240" width="108" height="118" fill="#ffffff"/>
<rect x="368" y="250" width="90" height="100" fill="#6c6a6c"/>
<path d="M413 250V350M368 300H458" stroke="#f0f0f0" stroke-width="8"/>
<rect x="466" y="240" width="50" height="120" fill="#9c9896" stroke="#e8e8e8" stroke-width="6"/>
<!-- left side small window -->
<rect x="118" y="280" width="38" height="95" fill="#f0f0f0"/><rect x="126" y="292" width="22" height="72" fill="#9a9a9a"/>
<!-- balcony windows -->
<rect x="608" y="255" width="130" height="185" fill="#f0f0f0"/>
<rect x="660" y="270" width="70" height="160" fill="#6e6e70"/><path d="M695 270V430M660 330H730M660 380H730" stroke="#e8e8e8" stroke-width="6"/>
<rect x="612" y="262" width="45" height="175" fill="#c8c6c4"/>
<rect x="765" y="265" width="120" height="175" fill="#f0f0f0"/>
<rect x="775" y="278" width="80" height="150" fill="#7a7878"/><path d="M815 278V428M775 330H855M775 380H855" stroke="#e8e8e8" stroke-width="6"/>
<rect x="855" y="275" width="28" height="160" fill="#c8c6c4"/>
<!-- right window -->
<rect x="950" y="280" width="115" height="95" fill="#f0f0f0"/><rect x="985" y="290" width="55" height="75" fill="#707070"/><path d="M1012 290V365" stroke="#e8e8e8" stroke-width="6"/>
<!-- balcony rail + plant -->
<path d="M600 350H975M600 440H975" stroke="#2a2a2a" stroke-width="5"/>
<path d="M610 350V440M640 350V440M670 350V440M700 350V440M730 350V440M760 350V440M790 350V440M820 350V440M850 350V440M880 350V440M910 350V440M940 350V440M970 350V440" stroke="#3a3a3a" stroke-width="3"/>
<path d="M725 430Q720 330 760 310Q800 340 790 430Z" fill="#5a7a38"/><rect x="735" y="420" width="45" height="20" fill="#a87a50"/>
<!-- porch structure -->
<path d="M590 448H975V700L660 710L590 690Z" fill="#f4f2f0"/>
<rect x="590" y="448" width="385" height="40" fill="#eeeae6"/>
<rect x="612" y="505" width="36" height="185" fill="#3a3a3a"/><path d="M630 505V690M612 560H648M612 620H648" stroke="#f0f0f0" stroke-width="5"/>
<rect x="690" y="505" width="70" height="190" fill="#5a5a5c"/><path d="M725 505V695M690 560H760M690 620H760" stroke="#f0f0f0" stroke-width="5"/>
<rect x="790" y="505" width="60" height="180" fill="#6a6466"/><path d="M820 505V685M790 560H850M790 620H850" stroke="#f0f0f0" stroke-width="5"/>
<rect x="880" y="500" width="50" height="170" fill="#8a7a78"/><path d="M905 500V670M880 560H930" stroke="#f0f0f0" stroke-width="5"/>
<rect x="975" y="480" width="95" height="150" fill="#ece8e4"/><rect x="985" y="490" width="40" height="130" fill="#8a8a8c"/><rect x="1030" y="490" width="30" height="130" fill="#c0bcb8"/>
<!-- lower left window with shutters -->
<rect x="300" y="510" width="55" height="205" fill="#9c9896" stroke="#e8e8e8" stroke-width="6"/>
<rect x="355" y="505" width="110" height="205" fill="#f4f4f4"/>
<rect x="362" y="515" width="95" height="188" fill="#585658"/><path d="M410 515V703M362 570H457M362 630H457" stroke="#e8e8e8" stroke-width="6"/>
<rect x="465" y="505" width="50" height="205" fill="#9c9896" stroke="#e8e8e8" stroke-width="6"/>
<!-- left door -->
<rect x="112" y="478" width="62" height="185" rx="20" fill="#f0f0f0"/><rect x="122" y="492" width="42" height="165" fill="#c4c4c4"/>
<!-- chairs -->
<path d="M20 600L60 590L90 700L40 720Z" fill="#b8875a"/><path d="M60 640L130 620L120 700L70 710Z" fill="#c8965a"/><path d="M40 720L160 690L130 720Z" fill="#3a3a3a"/>
</svg>
</body></html>
